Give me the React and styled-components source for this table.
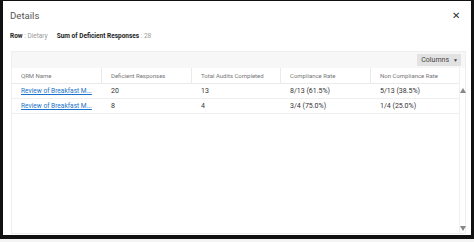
import React from 'react';
import styled, { createGlobalStyle } from 'styled-components';

const Global = createGlobalStyle`
  body {
    margin: 0;
    background: #f4f4f4;
    font-family: Roboto, "Liberation Sans", sans-serif;
  }
`
const Frame = styled.div`
  width: 474px;
  height: 242px;
  box-sizing: border-box;
  padding-bottom: 3px;
`
const Dialog = styled.div`
  height: 100%;
  box-sizing: border-box;
  background: #fff;
  border-style: solid;
  border-color: #111;
  border-width: 1px 3px 4px 3px;
  display: flex;
  flex-direction: column;
  padding: 0 5px 0 7px;
`
const TitleBar = styled.div`
  display: flex;
  align-items: center;
  justify-content: space-between;
  height: 24px;
  padding: 2px 0 0 0;
`
const Title = styled.div`
  font-size: 9.6px;
  color: #555;
`
const Close = styled.span`
  font-size: 10px;
  color: #333;
  margin-right: 6px;
`
const InfoRow = styled.div`
  display: flex;
  gap: 9px;
  font-size: 6.5px;
  color: #999;
  height: 16px;
  align-items: center;
  margin-top: 1px;
`
const Label = styled.b`
  color: #222;
  font-weight: 700;
`
const Grid = styled.div`
  margin-top: 7px;
  margin-left: 1px;
  flex: 1;
  border: 1px solid #efefef;
  display: flex;
  flex-direction: column;
  margin-bottom: 1px;
`
const Toolbar = styled.div`
  height: 16px;
  background: #f7f7f7;
  display: flex;
  justify-content: flex-end;
  align-items: center;
  padding-right: 4px;
`
const ColumnsButton = styled.div`
  background: #e2e2e2;
  font-size: 7px;
  color: #444;
  padding: 2px 3px 2px 4px;
  display: flex;
  align-items: center;
  gap: 4px;
  border-radius: 1px;
`
const Body = styled.div`
  flex: 1;
  display: flex;
`
const Table = styled.div`
  width: 447px;
  display: grid;
  grid-template-columns: 90px 90px 89px 90px 89px;
  align-content: start;
`
const HeadCell = styled.div`
  height: 16px;
  border-right: 1px solid #eaeaea;
  border-bottom: 1px solid #eaeaea;
  box-sizing: border-box;
  display: flex;
  align-items: center;
  padding-left: 9px;
  font-size: 6px;
  color: #777;
`
const Cell = styled.div`
  height: 15px;
  border-bottom: 1px solid #eeeeee;
  box-sizing: border-box;
  display: flex;
  align-items: center;
  padding-left: 9px;
  font-size: 7px;
  color: #333;
  min-width: 0;
`
const Link = styled.a`
  color: #1a73c8;
  text-decoration: underline;
  white-space: nowrap;
  font-size: 6.6px;
`
const Scroll = styled.div`
  flex: 1;
  display: flex;
  flex-direction: column;
  justify-content: space-between;
  align-items: center;
  border-left: 1px solid #f0f0f0;
  padding: 20px 0 2px;
`
const Arrow = styled.div`
  width: 0;
  height: 0;
  border-left: 3.5px solid transparent;
  border-right: 3.5px solid transparent;
  ${p => p.up ? 'border-bottom: 5px solid #888;' : 'border-top: 5px solid #888;'}
`

const headers = ['QRM Name', 'Deficient Responses', 'Total Audits Completed', 'Compliance Rate', 'Non Compliance Rate']
const rows = [
  ['Review of Breakfast M...', '20', '13', '8/13 (61.5%)', '5/13 (38.5%)'],
  ['Review of Breakfast M...', '8', '4', '3/4 (75.0%)', '1/4 (25.0%)'],
]

export default function App() {
  return (
    <Frame>
      <Global />
      <Dialog>
        <TitleBar>
          <Title>Details</Title>
          <Close>✕</Close>
        </TitleBar>
        <InfoRow>
          <span><Label>Row</Label> : Dietary</span>
          <span><Label>Sum of Deficient Responses</Label> : 28</span>
        </InfoRow>
        <Grid>
          <Toolbar>
            <ColumnsButton>Columns <span style={{ fontSize: 5 }}>▼</span></ColumnsButton>
          </Toolbar>
          <Body>
            <Table>
              {headers.map(h => <HeadCell key={h}>{h}</HeadCell>)}
              {rows.map((r, i) => r.map((c, j) => (
                <Cell key={i + '-' + j}>
                  {j === 0 ? <Link href="#">{c}</Link> : c}
                </Cell>
              )))}
            </Table>
            <Scroll>
              <Arrow up />
              <Arrow />
            </Scroll>
          </Body>
        </Grid>
      </Dialog>
    </Frame>
  );
}
